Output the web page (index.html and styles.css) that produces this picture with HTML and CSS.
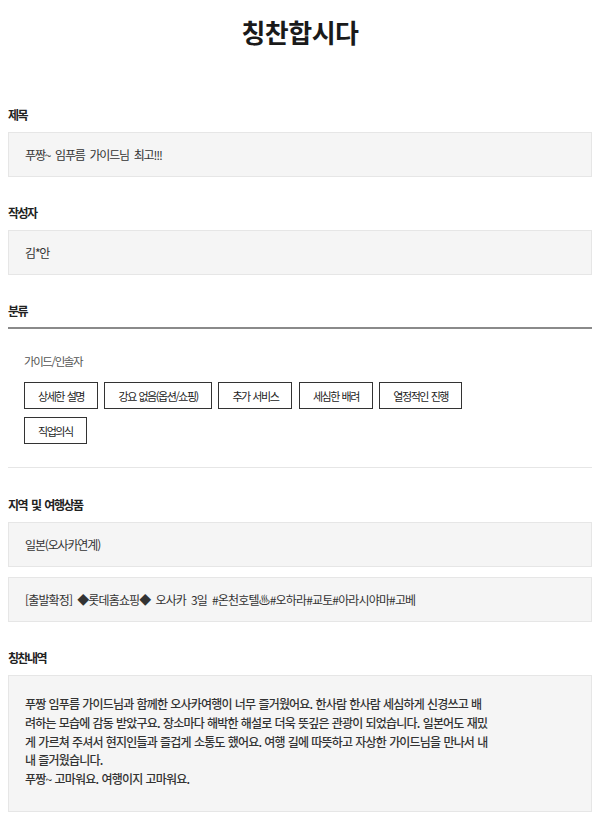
FILE: index.html
```html
<!DOCTYPE html>
<html lang="ko">
<head>
<meta charset="utf-8">
<title>칭찬합시다</title>
<link rel="stylesheet" href="styles.css">
</head>
<body>
<div class="page">
  <h1 class="title">칭찬합시다</h1>

  <section class="field first">
    <h2 class="label">제목</h2>
    <div class="box">푸짱~ 임푸름 가이드님 최고!!!</div>
  </section>

  <section class="field">
    <h2 class="label">작성자</h2>
    <div class="box">김*안</div>
  </section>

  <section class="field">
    <h2 class="label label-line">분류</h2>
    <div class="category">
      <p class="cat-title">가이드/인솔자</p>
      <div class="tags">
        <span class="tag">상세한 설명</span>
        <span class="tag">강요 없음(옵션/쇼핑)</span>
        <span class="tag">추가 서비스</span>
        <span class="tag">세심한 배려</span>
        <span class="tag">열정적인 진행</span>
        <span class="tag">직업의식</span>
      </div>
    </div>
  </section>

  <section class="field region">
    <h2 class="label">지역 및 여행상품</h2>
    <div class="box">일본(오사카연계)</div>
    <div class="box box-gap box-wide">[출발확정] ◆롯데홈쇼핑◆ 오사카 3일 #온천호텔♨#오하라#교토#아라시야마#고베</div>
  </section>

  <section class="field praise">
    <h2 class="label">칭찬내역</h2>
    <div class="box box-text"><p class="content">푸짱 임푸름 가이드님과 함께한 오사카여행이 너무 즐거웠어요. 한사람 한사람 세심하게 신경쓰고 배려하는 모습에 감동 받았구요. 장소마다 해박한 해설로 더욱 뜻깊은 관광이 되었습니다. 일본어도 재밌게 가르쳐 주셔서 현지인들과 즐겁게 소통도 했어요. 여행 길에 따뜻하고 자상한 가이드님을 만나서 내내 즐거웠습니다.<br>푸짱~ 고마워요. 여행이지 고마워요.</p></div>
  </section>
</div>
</body>
</html>
```

FILE: styles.css
```css
* {
  box-sizing: border-box;
}

body {
  margin: 0;
  background: #ffffff;
  color: #222222;
  font-family: "Noto Sans CJK KR", "Noto Sans", sans-serif;
}

.page {
  padding: 0 8px;
}

.title {
  margin: 0;
  padding-top: 14px;
  text-align: center;
  font-size: 26px;
  line-height: 36px;
  font-weight: 700;
  color: #1a1a1a;
  letter-spacing: -0.5px;
}

.field {
  margin-top: 26px;
}

.field.first {
  margin-top: 55px;
}

.label {
  margin: 0 0 7px;
  font-size: 12px;
  line-height: 20px;
  font-weight: 700;
  color: #222;
  letter-spacing: -1.5px;
  word-spacing: 2px;
}

.label-line {
  margin-bottom: 0;
  padding-bottom: 6px;
  border-bottom: 2px solid #8a8a8a;
}

.box {
  display: flex;
  align-items: center;
  min-height: 45px;
  padding: 0 16px;
  background: #f5f5f5;
  border: 1px solid #e6e6e6;
  font-size: 12px;
  color: #333;
  letter-spacing: -1.15px;
  word-spacing: 2.5px;
}

.box-gap {
  margin-top: 10px;
}

.box-wide {
  letter-spacing: -0.85px;
}

.category {
  padding: 22px 16px 23px;
  border-bottom: 1px solid #e6e6e6;
}

.cat-title {
  margin: 0 0 11px;
  font-size: 11.5px;
  line-height: 20px;
  color: #555;
  letter-spacing: -1.4px;
}

.tags {
  display: flex;
  flex-wrap: wrap;
  gap: 8px 6.5px;
  max-width: 500px;
}

.tag {
  display: inline-flex;
  align-items: center;
  height: 27px;
  padding: 0 13px;
  border: 1px solid #333;
  font-size: 11px;
  color: #222;
  letter-spacing: -1.45px;
  word-spacing: 1px;
}

.region {
  margin-top: 27px;
}

.praise {
  margin-top: 26px;
}

.box-text {
  display: block;
  padding: 19px 16px 22px;
}

.content {
  margin: 0;
  width: 466px;
  font-size: 12px;
  line-height: 18.8px;
  font-weight: 500;
  letter-spacing: -0.8px;
  word-spacing: 0.5px;
  word-break: break-all;
  color: #333;
}
```
